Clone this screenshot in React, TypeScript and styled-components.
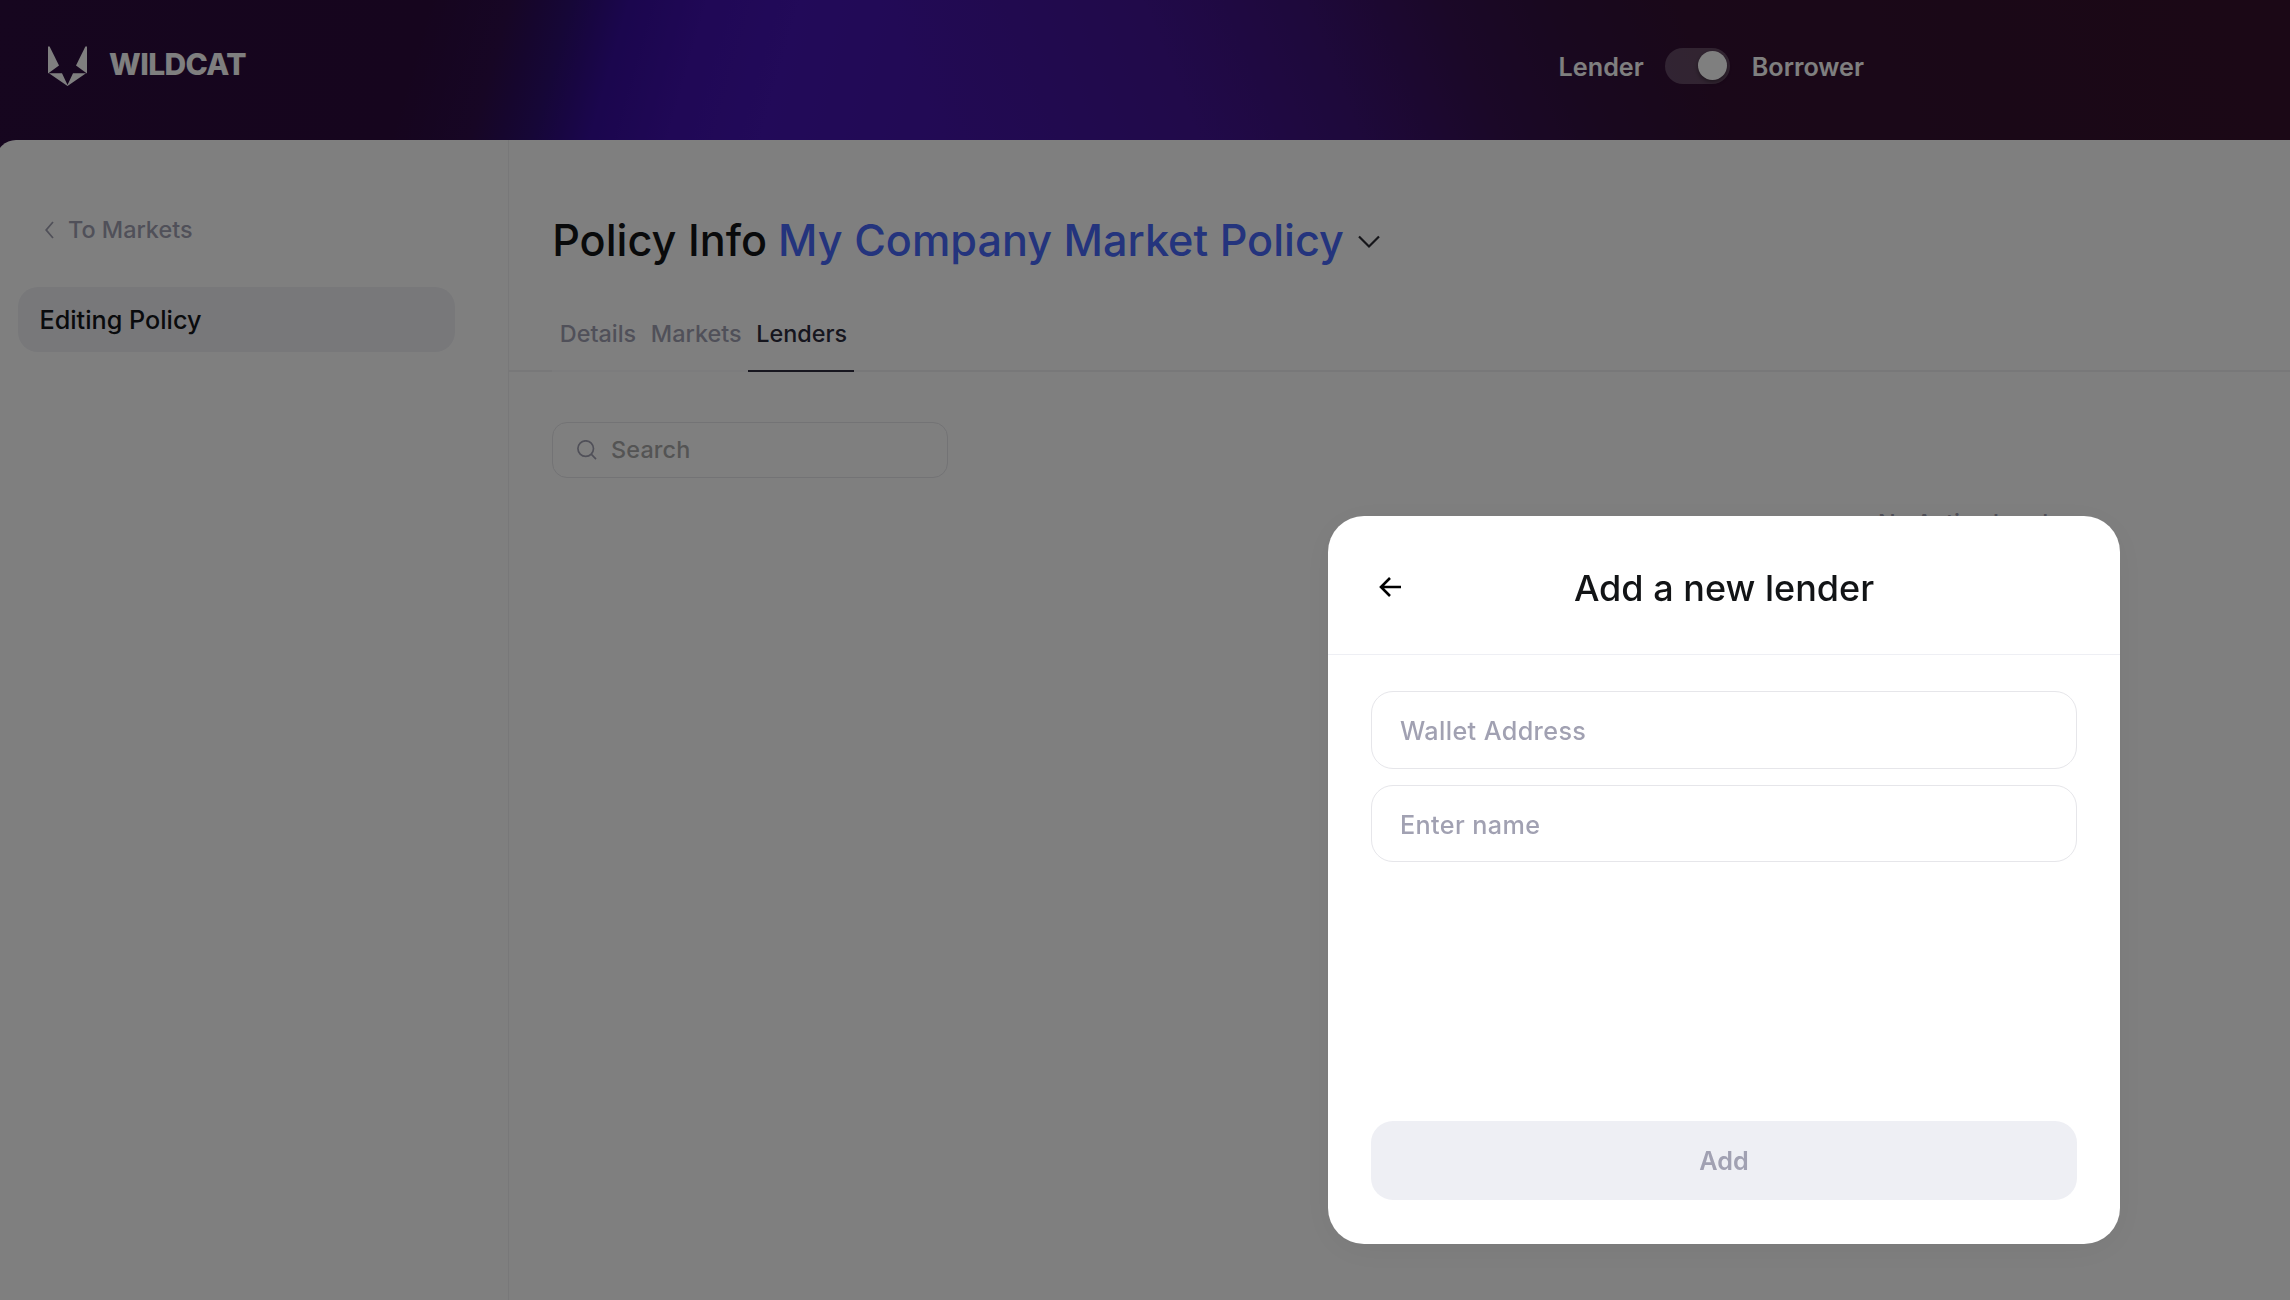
import React from "react";
import styled, { createGlobalStyle } from "styled-components";

const GlobalStyle = createGlobalStyle`
  * { box-sizing: border-box; }
  html, body { margin: 0; padding: 0; overflow: hidden; }
  body {
    background: #2c0c3e;
    font-family: Inter, "Liberation Sans", sans-serif;
    -webkit-font-smoothing: antialiased;
  }
`;

const Page = styled.div`
  display: flex;
  flex-direction: column;
  height: 1300px;
  overflow: hidden;
`;

const Header = styled.header`
  flex: none;
  display: flex;
  justify-content: space-between;
  align-items: flex-start;
  height: 160px;
  padding: 46px 426px 0 48px;
  color: #fff;
  background:
    linear-gradient(68deg,
      rgba(68, 20, 160, 0) 880px,
      rgb(66, 20, 148) 1120px,
      rgb(60, 18, 118) 1270px,
      rgb(54, 16, 80) 1400px,
      rgb(50, 16, 62) 1500px,
      rgb(52, 16, 50) 1620px,
      rgb(54, 16, 44) 2120px),
    linear-gradient(106deg,
      rgb(44, 12, 62) 0,
      rgb(44, 11, 60) 410px,
      rgb(46, 12, 74) 490px,
      rgb(44, 14, 110) 548px,
      rgb(54, 12, 156) 605px,
      rgb(64, 16, 172) 680px,
      rgb(68, 20, 178) 770px,
      rgb(68, 20, 168) 960px);
`;

const Brand = styled.div`
  display: flex;
  align-items: center;
  gap: 21px;
  height: 40px;
`;

const Wordmark = styled.span`
  padding-bottom: 4px;
  font-size: 30px;
  line-height: 36px;
  font-weight: 800;
  letter-spacing: -0.6px;
`;

const RoleSwitch = styled.div`
  display: flex;
  align-items: center;
  padding-top: 2px;
`;

const RoleLabel = styled.span`
  padding-top: 2px;
  font-size: 25.2px;
  line-height: 34px;
  font-weight: 600;
`;

const Track = styled.div`
  display: flex;
  justify-content: flex-end;
  width: 65px;
  height: 36px;
  margin: 0 22px 0 21px;
  padding: 3px;
  border-radius: 18px;
  background: rgba(255, 255, 255, 0.24);
`;

const Thumb = styled.div`
  width: 29px;
  height: 29px;
  border-radius: 50%;
  background: #fff;
  box-shadow: 0 2px 4px rgba(0, 0, 0, 0.4);
`;

const Sheet = styled.div`
  flex: 1;
  display: flex;
  margin: -20px 0 0 -4px;
  border-radius: 20px 0 0 0;
  background: #fff;
`;

const Sidebar = styled.aside`
  flex: none;
  width: 513px;
  padding: 76px 53px 0 22px;
  border-right: 1px solid #f0f0f3;
`;

const BackLink = styled.a`
  display: flex;
  align-items: center;
  gap: 14px;
  height: 28px;
  padding-left: 27px;
  color: #a1a1b2;
  font-size: 23.4px;
  line-height: 28px;
  font-weight: 500;
`;

const SideItem = styled.div`
  height: 65px;
  margin-top: 43px;
  padding: 1px 0 0 21.5px;
  border-radius: 20px;
  background: #f0f1f5;
  color: #14161a;
  font-size: 25.2px;
  line-height: 65px;
  font-weight: 500;
`;

const Content = styled.main`
  flex: 1;
  min-width: 0;
`;

const TitleRow = styled.h1`
  display: flex;
  align-items: center;
  height: 60px;
  margin: 70px 0 0;
  padding-left: 43.2px;
  color: #121416;
  font-size: 43.2px;
  line-height: 60px;
  font-weight: 500;
  white-space: pre;
`;

const PolicyName = styled.span`
  margin: 0 14px 0 -0.4px;
  color: #4868fa;
`;

const Tabs = styled.nav`
  display: flex;
  height: 73px;
  margin-top: 29px;
  padding-left: 43px;
  background: linear-gradient(#f0f0f3, #f0f0f3) bottom / 100% 2px no-repeat;
`;

const Tab = styled.span<{ $active?: boolean }>`
  height: 73px;
  padding: 21px 6.9px 0 7.8px;
  border-bottom: 2px solid ${(p) => (p.$active ? "#2f2d3e" : "#f8f8fa")};
  color: ${(p) => (p.$active ? "#2c2c3c" : "#a1a1b2")};
  font-size: 23.4px;
  line-height: 28px;
  font-weight: 500;
`;

const SearchBox = styled.div`
  display: flex;
  align-items: center;
  gap: 14px;
  width: 396px;
  height: 56px;
  margin: 50px 0 0 43px;
  padding-left: 24px;
  border: 1px solid #e6e6ea;
  border-radius: 15px;
  color: #a9a9a9;
  font-size: 23.4px;
  line-height: 28px;
  font-weight: 500;
  letter-spacing: 0.15px;
`;

const EmptyText = styled.p`
  margin: 30px 0 0 1369px;
  color: #a1a1b2;
  font-size: 23.4px;
  line-height: 30px;
  font-weight: 500;
`;

const Backdrop = styled.div`
  position: fixed;
  inset: 0;
  display: flex;
  justify-content: flex-end;
  align-items: flex-end;
  padding: 0 170px 56px 0;
  background: rgba(0, 0, 0, 0.5);
`;

const Dialog = styled.section`
  display: flex;
  flex-direction: column;
  width: 792px;
  height: 728px;
  border-radius: 36px;
  background: #fff;
  box-shadow: 0 6px 36px rgba(0, 0, 0, 0.05);
`;

const DialogHead = styled.header`
  display: grid;
  grid-template-columns: 44px 1fr 44px;
  align-items: center;
  height: 139px;
  padding: 6px 43px 0;
  border-bottom: 1px solid #eeeff4;
`;

const BackButton = styled.div`
  display: flex;
  padding: 0 0 2px 8px;
`;

const DialogTitle = styled.h2`
  margin: 0;
  color: #121416;
  font-size: 36px;
  line-height: 44px;
  font-weight: 500;
  text-align: center;
`;

const Fields = styled.div`
  flex: 1;
  display: flex;
  flex-direction: column;
  gap: 16px;
  padding: 36px 43px 0;
`;

const Field = styled.div<{ $height: number }>`
  height: ${(p) => p.$height}px;
  padding: 1px 0 0 28px;
  border: 1px solid #e6e6ea;
  border-radius: 22px;
  color: #a1a1b2;
  font-size: 25.2px;
  line-height: 76px;
  font-weight: 500;
  letter-spacing: 0.38px;
`;

const AddButton = styled.button`
  height: 79px;
  margin: 0 43px 44px;
  border: 0;
  border-radius: 22px;
  background: #eeeff4;
  color: #a1a1b2;
  font: 600 25.2px/79px Inter, sans-serif;
`;

const Logo = () => (
  <svg width="40" height="40" viewBox="0 0 40 40" fill="#fff">
    <path d="M0 0.5H1.6L11 19.5L0 27.5Z" />
    <path d="M39 0.5H37.4L28 19.5L39 27.5Z" />
    <path d="M1 27.2H14L19.5 39L25 27.2H38L19.5 40Z" />
  </svg>
);

const ChevronLeft = () => (
  <svg width="9" height="18" viewBox="0 0 9 18" fill="none" stroke="#a1a1b2" strokeWidth="1.8">
    <path d="M8 1L1.2 9L8 17" />
  </svg>
);

const DownIcon = styled.svg`
  margin-top: 4px;
`;

const ChevronDown = () => (
  <DownIcon width="22" height="14" viewBox="0 0 22 14" fill="none" stroke="#2c2c34" strokeWidth="2.2">
    <path d="M1 1.5L11 11.5L21 1.5" />
  </DownIcon>
);

const SearchIcon = () => (
  <svg width="20" height="20" viewBox="0 0 20 20" fill="none" stroke="#a1a1b2" strokeWidth="1.7">
    <circle cx="8.7" cy="8.6" r="7.8" />
    <path d="M14.2 14.2L19 19.2" />
  </svg>
);

const ArrowLeft = () => (
  <svg width="22" height="20" viewBox="0 0 22 20" fill="none" stroke="#000" strokeWidth="2.6">
    <path d="M22 10H2M11 1L2 10L11 19" />
  </svg>
);

export default function App() {
  return (
    <Page>
      <GlobalStyle />
      <Header>
        <Brand>
          <Logo />
          <Wordmark>WILDCAT</Wordmark>
        </Brand>
        <RoleSwitch>
          <RoleLabel>Lender</RoleLabel>
          <Track>
            <Thumb />
          </Track>
          <RoleLabel>Borrower</RoleLabel>
        </RoleSwitch>
      </Header>
      <Sheet>
        <Sidebar>
          <BackLink>
            <ChevronLeft />
            To Markets
          </BackLink>
          <SideItem>Editing Policy</SideItem>
        </Sidebar>
        <Content>
          <TitleRow>
            {"Policy Info "}
            <PolicyName>My Company Market Policy</PolicyName>
            <ChevronDown />
          </TitleRow>
          <Tabs>
            <Tab>Details</Tab>
            <Tab>Markets</Tab>
            <Tab $active>Lenders</Tab>
          </Tabs>
          <SearchBox>
            <SearchIcon />
            Search
          </SearchBox>
          <EmptyText>No Active Lenders</EmptyText>
        </Content>
      </Sheet>
      <Backdrop>
        <Dialog>
          <DialogHead>
            <BackButton>
              <ArrowLeft />
            </BackButton>
            <DialogTitle>Add a new lender</DialogTitle>
          </DialogHead>
          <Fields>
            <Field $height={78}>Wallet Address</Field>
            <Field $height={77}>Enter name</Field>
          </Fields>
          <AddButton>Add</AddButton>
        </Dialog>
      </Backdrop>
    </Page>
  );
}
